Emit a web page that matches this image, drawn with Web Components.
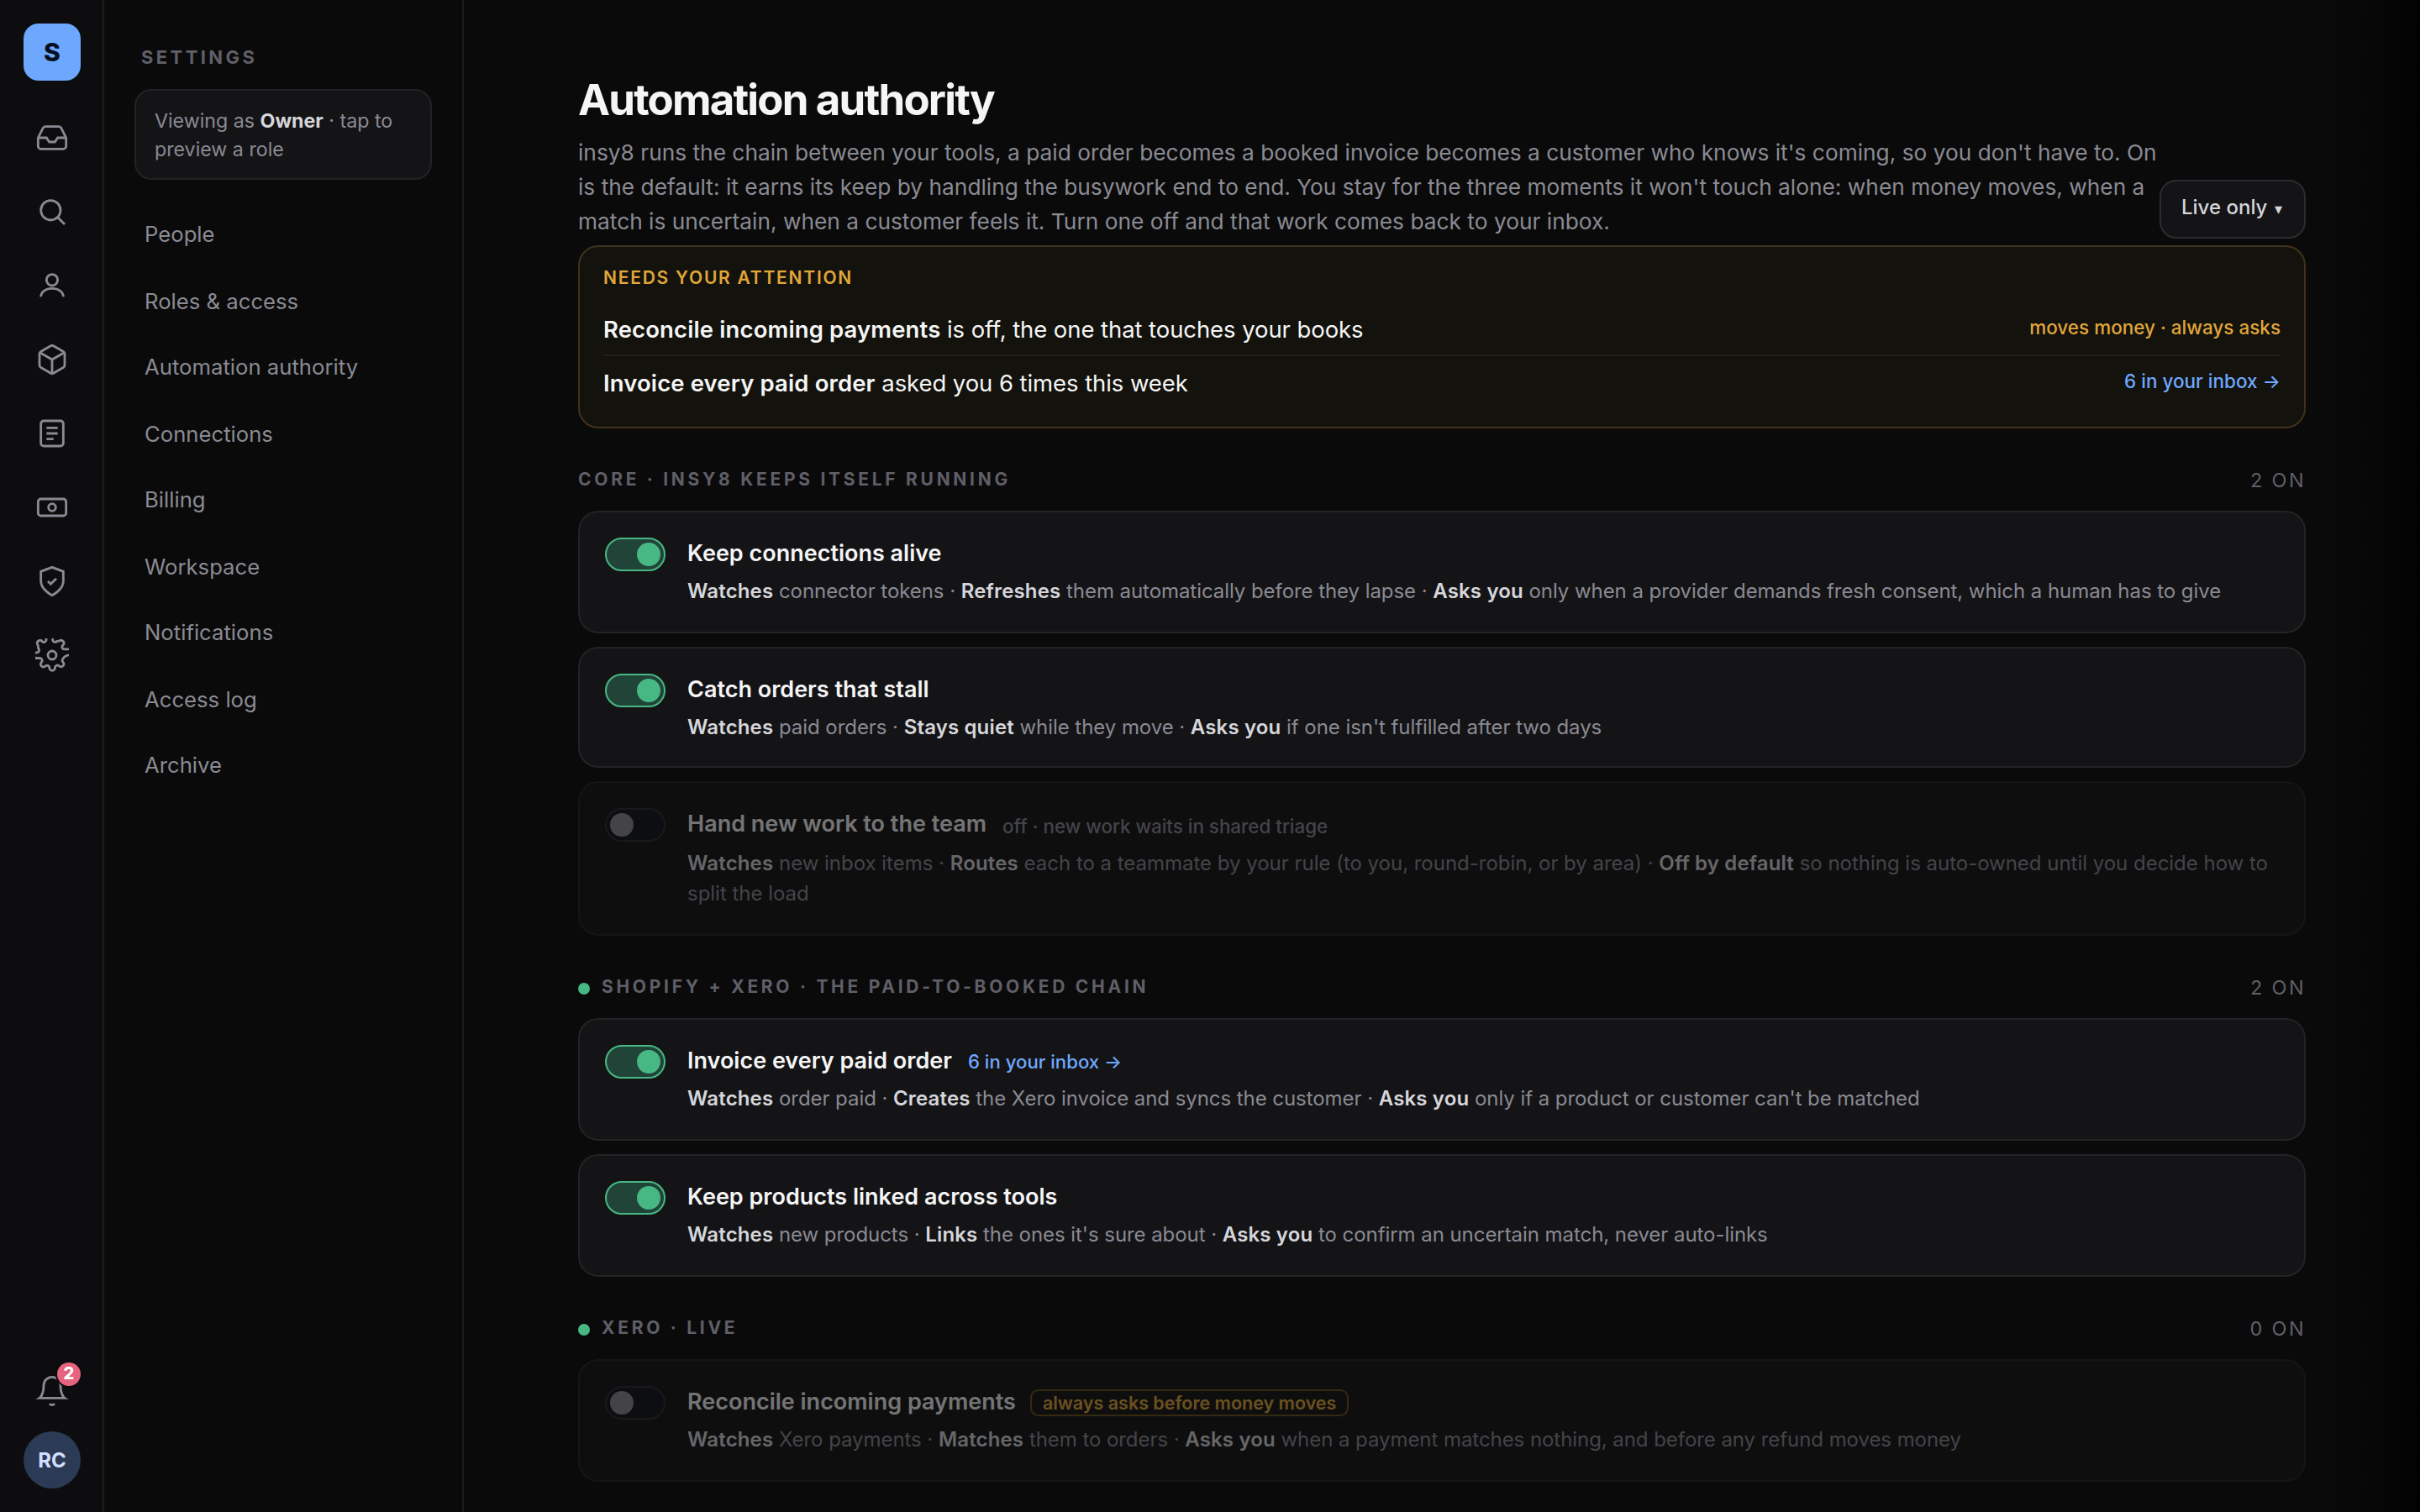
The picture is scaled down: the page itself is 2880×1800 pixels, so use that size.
<!DOCTYPE html>
<html lang="en">
<head>
<meta charset="utf-8">
<title>Automation authority</title>
<style>
html, body {
	background: #0a0a0a;
	height: 100%;
	margin: 0;
	overflow: hidden;
}

body {
	--amber: #e0a63a;
	--blue: #6ea8fe;
	--border: #232326;
	--dim: #8a8a93;
	--faint: #5f5f68;
	--green: #47b883;
	--strong: #d6d6da;
	--text: #f5f5f5;
	color: var(--dim);
	font-family: Inter, "Liberation Sans", sans-serif;
}

settings-nav b {
	color: var(--strong);
	font-weight: 700;
}
</style>
</head>
<body>
<app-shell>
	<icon-rail slot="rail" initials="RC" badge="2">S</icon-rail>
	<settings-nav slot="nav" heading="Settings">
		<span slot="role">Viewing as <b>Owner</b> · tap to preview a role</span>
		<nav-item>People</nav-item>
		<nav-item>Roles &amp; access</nav-item>
		<nav-item>Automation authority</nav-item>
		<nav-item>Connections</nav-item>
		<nav-item>Billing</nav-item>
		<nav-item>Workspace</nav-item>
		<nav-item>Notifications</nav-item>
		<nav-item>Access log</nav-item>
		<nav-item>Archive</nav-item>
	</settings-nav>

	<page-header heading="Automation authority" filter="Live only">insy8 runs the chain between your tools, a paid order becomes a booked invoice becomes a customer who knows it's coming, so you don't have to. On is the default: it earns its keep by handling the busywork end to end. You stay for the three moments it won't touch alone: when money moves, when a match is uncertain, when a customer feels it. Turn one off and that work comes back to your inbox.</page-header>

	<attention-box heading="Needs your attention">
		<attention-row note="moves money · always asks"><b>Reconcile incoming payments</b> is off, the one that touches your books</attention-row>
		<attention-row note="6 in your inbox →" link><b>Invoice every paid order</b> asked you 6 times this week</attention-row>
	</attention-box>

	<rule-group heading="Core · insy8 keeps itself running" count="2 on">
		<rule-card heading="Keep connections alive" on><b>Watches</b> connector tokens · <b>Refreshes</b> them automatically before they lapse · <b>Asks you</b> only when a provider demands fresh consent, which a human has to give</rule-card>
		<rule-card class="snug" heading="Catch orders that stall" on><b>Watches</b> paid orders · <b>Stays quiet</b> while they move · <b>Asks you</b> if one isn't fulfilled after two days</rule-card>
		<rule-card heading="Hand new work to the team" hint="off · new work waits in shared triage"><b>Watches</b> new inbox items · <b>Routes</b> each to a teammate by your rule (to you, round-robin, or by area) · <b>Off by default</b> so nothing is auto-owned until you decide how to split the load</rule-card>
	</rule-group>

	<rule-group heading="Shopify + Xero · the paid-to-booked chain" count="2 on" live>
		<rule-card heading="Invoice every paid order" link="6 in your inbox →" on><b>Watches</b> order paid · <b>Creates</b> the Xero invoice and syncs the customer · <b>Asks you</b> only if a product or customer can't be matched</rule-card>
		<rule-card heading="Keep products linked across tools" on><b>Watches</b> new products · <b>Links</b> the ones it's sure about · <b>Asks you</b> to confirm an uncertain match, never auto-links</rule-card>
	</rule-group>

	<rule-group heading="Xero · live" count="0 on" live>
		<rule-card heading="Reconcile incoming payments" pill="always asks before money moves"><b>Watches</b> Xero payments · <b>Matches</b> them to orders · <b>Asks you</b> when a payment matches nothing, and before any refund moves money</rule-card>
	</rule-group>
</app-shell>

<script>
class Base extends HTMLElement {
	constructor() {
		super();
		this.attachShadow({ mode: 'open' });
	}

	connectedCallback() {
		this.shadowRoot.innerHTML = this.render();
	}

	attr(name) {
		return this.getAttribute(name) || '';
	}
}

class AppShell extends Base {
	render() {
		return `<slot name="rail"></slot>
<slot name="nav"></slot>
<main><slot></slot></main>

<style>
:host {
	display: grid;
	grid-template-columns: 124px 428px 1fr;
	height: 1800px;
	overflow: hidden;
}

main {
	background: linear-gradient(90deg, transparent 2200px, rgba(0, 0, 0, 0.3) 2265px, rgba(0, 0, 0, 0.8));
	box-sizing: border-box;
	padding: 88px 136px 0;
}
</style>`;
	}
}

const icons = {
	inbox: '<path d="M22 12h-6l-2 3h-4l-2-3H2"/><path d="M5.45 5.11 2 12v6a2 2 0 0 0 2 2h16a2 2 0 0 0 2-2v-6l-3.45-6.89A2 2 0 0 0 16.76 4H7.24a2 2 0 0 0-1.79 1.11z"/>',
	search: '<circle cx="11" cy="11" r="7"/><path d="m21 21-5-5"/>',
	person: '<circle cx="12" cy="8" r="4"/><path d="M4 20c0-3.6 3.6-6 8-6s8 2.4 8 6"/>',
	box: '<path d="M21 16V8a2 2 0 0 0-1-1.73l-7-4a2 2 0 0 0-2 0l-7 4A2 2 0 0 0 3 8v8a2 2 0 0 0 1 1.73l7 4a2 2 0 0 0 2 0l7-4A2 2 0 0 0 21 16z"/><path d="M3.3 7 12 12l8.7-5M12 22V12"/>',
	doc: '<rect x="4" y="3" width="16" height="18" rx="2"/><path d="M8 8h8M8 12h8M8 16h5"/>',
	money: '<rect x="2" y="6" width="20" height="12" rx="2"/><circle cx="12" cy="12" r="2.6"/>',
	shield: '<path d="M12 22s8-4 8-10V5l-8-3-8 3v7c0 6 8 10 8 10z"/><path d="m9 12 2 2 4-4"/>',
	gear: '<circle cx="12" cy="12" r="3"/><path d="M25 11.9h-1c-2 .1-3.4 1.2-4.6 3.1a1.65 1.65 0 0 0 .33 1.82l.06.06a2 2 0 1 1-2.83 2.83l-.06-.06a1.65 1.65 0 0 0-2.8 1.17V21a2 2 0 0 1-4 0v-.09a1.65 1.65 0 0 0-2.8-1.17l-.06.06a2 2 0 1 1-2.83-2.83l.06-.06a1.65 1.65 0 0 0-1.17-2.8H1a2 2 0 0 1 0-4h.09a1.65 1.65 0 0 0 1.17-2.8L1.8 4.6a2 2 0 0 1 2.8-2.8l.4.4a1.65 1.65 0 0 0 2.8-1.17V-1M12.4-1v2a1.65 1.65 0 0 0 2.8 1.17l2-.4a2 2 0 0 1 2.8 2.8l-.3.3a1.65 1.65 0 0 0 1.17 2.9H25"/>',
	bell: '<path d="M18 8A6 6 0 0 0 6 8c0 7-3 9-3 9h18s-3-2-3-9"/><path d="M10.3 21a1.94 1.94 0 0 0 3.4 0"/>',
};

class RailIcon extends Base {
	render() {
		return `<svg viewBox="0 0 24 24">${icons[this.attr('name')]}</svg>

<style>
:host {
	display: block;
	height: 40px;
	width: 40px;
}

svg {
	display: block;
	fill: none;
	stroke: var(--dim);
	stroke-width: 1.7;
}
</style>`;
	}
}

class IconRail extends Base {
	render() {
		const names = ['inbox', 'search', 'person', 'box', 'doc', 'money', 'shield', 'gear'];
		return `<div class="logo"><slot></slot></div>
<nav>${names.map((name) => `<rail-icon name="${name}"></rail-icon>`).join('')}</nav>
<div class="bell">
	<rail-icon name="bell"></rail-icon>
	<span class="badge">${this.attr('badge')}</span>
</div>
<div class="avatar">${this.attr('initials')}</div>

<style>
:host {
	align-items: center;
	background: #0d0d0f;
	border-right: 2px solid #1d1d20;
	box-sizing: border-box;
	display: flex;
	flex-direction: column;
	padding: 28px 0 28px 2px;
}

.logo, .avatar {
	align-items: center;
	display: flex;
	height: 68px;
	justify-content: center;
	width: 68px;
}

.logo {
	background: var(--blue);
	border-radius: 18px;
	color: #06101f;
	font-size: 30px;
	font-weight: 800;
}

nav {
	display: flex;
	flex: 1;
	flex-direction: column;
	gap: 48px;
	padding-top: 48px;
}

.bell {
	margin-bottom: 28px;
	position: relative;
}

.badge {
	background: #e5637f;
	border-radius: 50%;
	box-shadow: 0 0 0 2px #0a0a0a;
	color: #fff;
	font-size: 20px;
	font-weight: 800;
	height: 28px;
	left: 26px;
	line-height: 27px;
	position: absolute;
	text-align: center;
	top: -14px;
	width: 28px;
}

.avatar {
	background: #2b3a55;
	border-radius: 50%;
	color: #d2deff;
	font-size: 24px;
	font-weight: 700;
}
</style>`;
	}
}

class SettingsNav extends Base {
	render() {
		return `<h2>${this.attr('heading')}</h2>
<div class="role"><slot name="role"></slot></div>
<nav><slot></slot></nav>

<style>
:host {
	border-right: 2px solid #1d1d20;
	box-sizing: border-box;
	display: block;
	padding: 55px 36px 0;
}

h2 {
	color: var(--faint);
	font-size: 22px;
	font-weight: 700;
	letter-spacing: 0.155em;
	line-height: 26px;
	margin: 0 0 25px 8px;
	text-transform: uppercase;
}

.role {
	background: #141417;
	border: 2px solid var(--border);
	border-radius: 20px;
	box-sizing: border-box;
	font-size: 23.2px;
	height: 108px;
	line-height: 34px;
	padding: 19px 22px;
}

::slotted(span) {
	display: block;
}

nav {
	padding: 39px 12px 0;
}
</style>`;
	}
}

class NavItem extends Base {
	render() {
		return `<slot></slot>

<style>
:host {
	box-sizing: border-box;
	display: block;
	font-size: 25.7px;
	height: 79px;
	line-height: 52px;
}

:host(:nth-of-type(even)) {
	padding-top: 1px;
}
</style>`;
	}
}

class PageHeader extends Base {
	render() {
		return `<div class="text">
	<h1>${this.attr('heading')}</h1>
	<p><slot></slot></p>
</div>
<button>${this.attr('filter')} <i>▾</i></button>

<style>
:host {
	align-items: flex-end;
	display: flex;
	height: 196px;
	margin-bottom: 8px;
}

.text {
	flex: 1;
	margin-bottom: -1px;
}

h1 {
	color: var(--text);
	font-size: 51px;
	font-weight: 700;
	letter-spacing: -0.036em;
	line-height: 60px;
	margin: 0 0 13px;
}

p {
	font-size: 26.3px;
	line-height: 40.9px;
	margin: 0;
}

button {
	background: #141417;
	border: 2px solid #2c2c30;
	border-radius: 20px;
	box-sizing: border-box;
	color: var(--strong);
	flex: none;
	font: 500 24px/30px Inter, sans-serif;
	height: 70px;
	padding: 0 24px 2px;
	text-align: left;
	width: 174px;
	white-space: nowrap;
}

i {
	font-size: 18px;
	font-style: normal;
	margin-left: 2px;
}
</style>`;
	}
}

class AttentionBox extends Base {
	render() {
		return `<h3>${this.attr('heading')}</h3>
<slot></slot>

<style>
:host {
	background: #13120d;
	border: 2px solid #41321a;
	border-radius: 24px;
	display: block;
	padding: 24px 28px 20px;
}

h3 {
	color: var(--amber);
	font-size: 21px;
	font-weight: 600;
	letter-spacing: 0.084em;
	line-height: 26px;
	margin: 0 0 16px;
	text-transform: uppercase;
}
</style>`;
	}
}

class AttentionRow extends Base {
	render() {
		return `<div><slot></slot></div>
<span>${this.attr('note')}</span>

<style>
:host {
	box-sizing: border-box;
	color: var(--text);
	display: flex;
	font-size: 27.5px;
	height: 64px;
	justify-content: space-between;
	line-height: 60px;
}

:host(:first-of-type) {
	border-bottom: 2px solid #1f1e1a;
}

div {
	letter-spacing: -0.08px;
	padding-top: 2px;
}

::slotted(b) {
	font-weight: 600;
	letter-spacing: 0.12px;
}

span {
	color: var(--amber);
	font-size: 22.5px;
	font-weight: 500;
	line-height: 60px;
}

:host([link]) span {
	color: var(--blue);
}
</style>`;
	}
}

class RuleGroup extends Base {
	render() {
		const dot = this.hasAttribute('live') ? '<i></i>' : '';
		return `<header>${dot}<h3>${this.attr('heading')}</h3><span>${this.attr('count')}</span></header>
<section><slot></slot></section>

<style>
:host {
	display: block;
	padding-top: 48px;
}

header {
	color: var(--faint);
	display: flex;
	gap: 14px;
	height: 26px;
	line-height: 26px;
	margin-bottom: 24px;
	text-transform: uppercase;
}

i {
	background: var(--green);
	border-radius: 50%;
	height: 14px;
	margin-top: 8px;
	width: 14px;
}

h3 {
	flex: 1;
	font-size: 21px;
	font-weight: 650;
	letter-spacing: 0.177em;
	margin: 0;
}

span {
	font-size: 23.5px;
	letter-spacing: 0.1em;
	padding-top: 1px;
}

section {
	display: flex;
	flex-direction: column;
	gap: 16px;
}
</style>`;
	}
}

class ToggleSwitch extends Base {
	render() {
		return `<i></i>

<style>
:host {
	background: #10141b;
	border: 2px solid #2c2c30;
	border-radius: 20px;
	box-sizing: border-box;
	display: flex;
	flex: none;
	height: 40px;
	padding: 4px;
	width: 72px;
}

:host([on]) {
	background: #214438;
	border-color: var(--green);
	justify-content: flex-end;
}

i {
	background: #8a8a93;
	border-radius: 50%;
	width: 28px;
}

:host([on]) i {
	background: var(--green);
}
</style>`;
	}
}

class RuleCard extends Base {
	render() {
		const extra = ['hint', 'link', 'pill']
			.filter((name) => this.hasAttribute(name))
			.map((name) => `<span class="${name}">${this.attr(name)}</span>`)
			.join('');
		return `<toggle-switch ${this.hasAttribute('on') ? 'on' : ''}></toggle-switch>
<div class="body">
	<div class="title"><h4>${this.attr('heading')}</h4>${extra}</div>
	<p><slot></slot></p>
</div>

<style>
:host {
	background: #141417;
	border: 2px solid var(--border);
	border-radius: 24px;
	display: flex;
	gap: 26px;
	padding: 28px 30px 30px;
}

:host(.snug) {
	padding-bottom: 28px;
}

:host(:not([on])) {
	opacity: 0.45;
}

toggle-switch {
	margin-top: 2px;
}

.body {
	padding-top: 1px;
}

.title {
	display: flex;
	gap: 19px;
	height: 40px;
	line-height: 40px;
}

h4 {
	color: var(--text);
	font-size: 27px;
	font-weight: 600;
	margin: 0;
}

.hint {
	font-size: 22.4px;
	font-weight: 500;
	padding-top: 3px;
}

.link {
	color: var(--blue);
	font-size: 22.2px;
	font-weight: 500;
	padding-top: 1px;
}

.pill {
	border: 2px solid #6b4f1d;
	border-radius: 10px;
	box-sizing: border-box;
	color: var(--amber);
	font-size: 21.5px;
	font-weight: 600;
	height: 32px;
	line-height: 29px;
	margin: 5px 0 0 -2px;
	padding: 0 13px;
}

p {
	font-size: 24px;
	letter-spacing: -0.06px;
	line-height: 36px;
	margin: 7px 0 0;
}

:host([hint]) p {
	letter-spacing: -0.02px;
	margin-top: 9px;
}

::slotted(b) {
	color: var(--strong);
	font-weight: 600;
	letter-spacing: 0.15px;
}
</style>`;
	}
}

const elements = {
	'app-shell': AppShell,
	'rail-icon': RailIcon,
	'icon-rail': IconRail,
	'settings-nav': SettingsNav,
	'nav-item': NavItem,
	'page-header': PageHeader,
	'attention-box': AttentionBox,
	'attention-row': AttentionRow,
	'rule-group': RuleGroup,
	'toggle-switch': ToggleSwitch,
	'rule-card': RuleCard,
};

for (const [name, element] of Object.entries(elements)) {
	if (!customElements.get(name)) {
		customElements.define(name, element);
	}
}
</script>
</body>
</html>
